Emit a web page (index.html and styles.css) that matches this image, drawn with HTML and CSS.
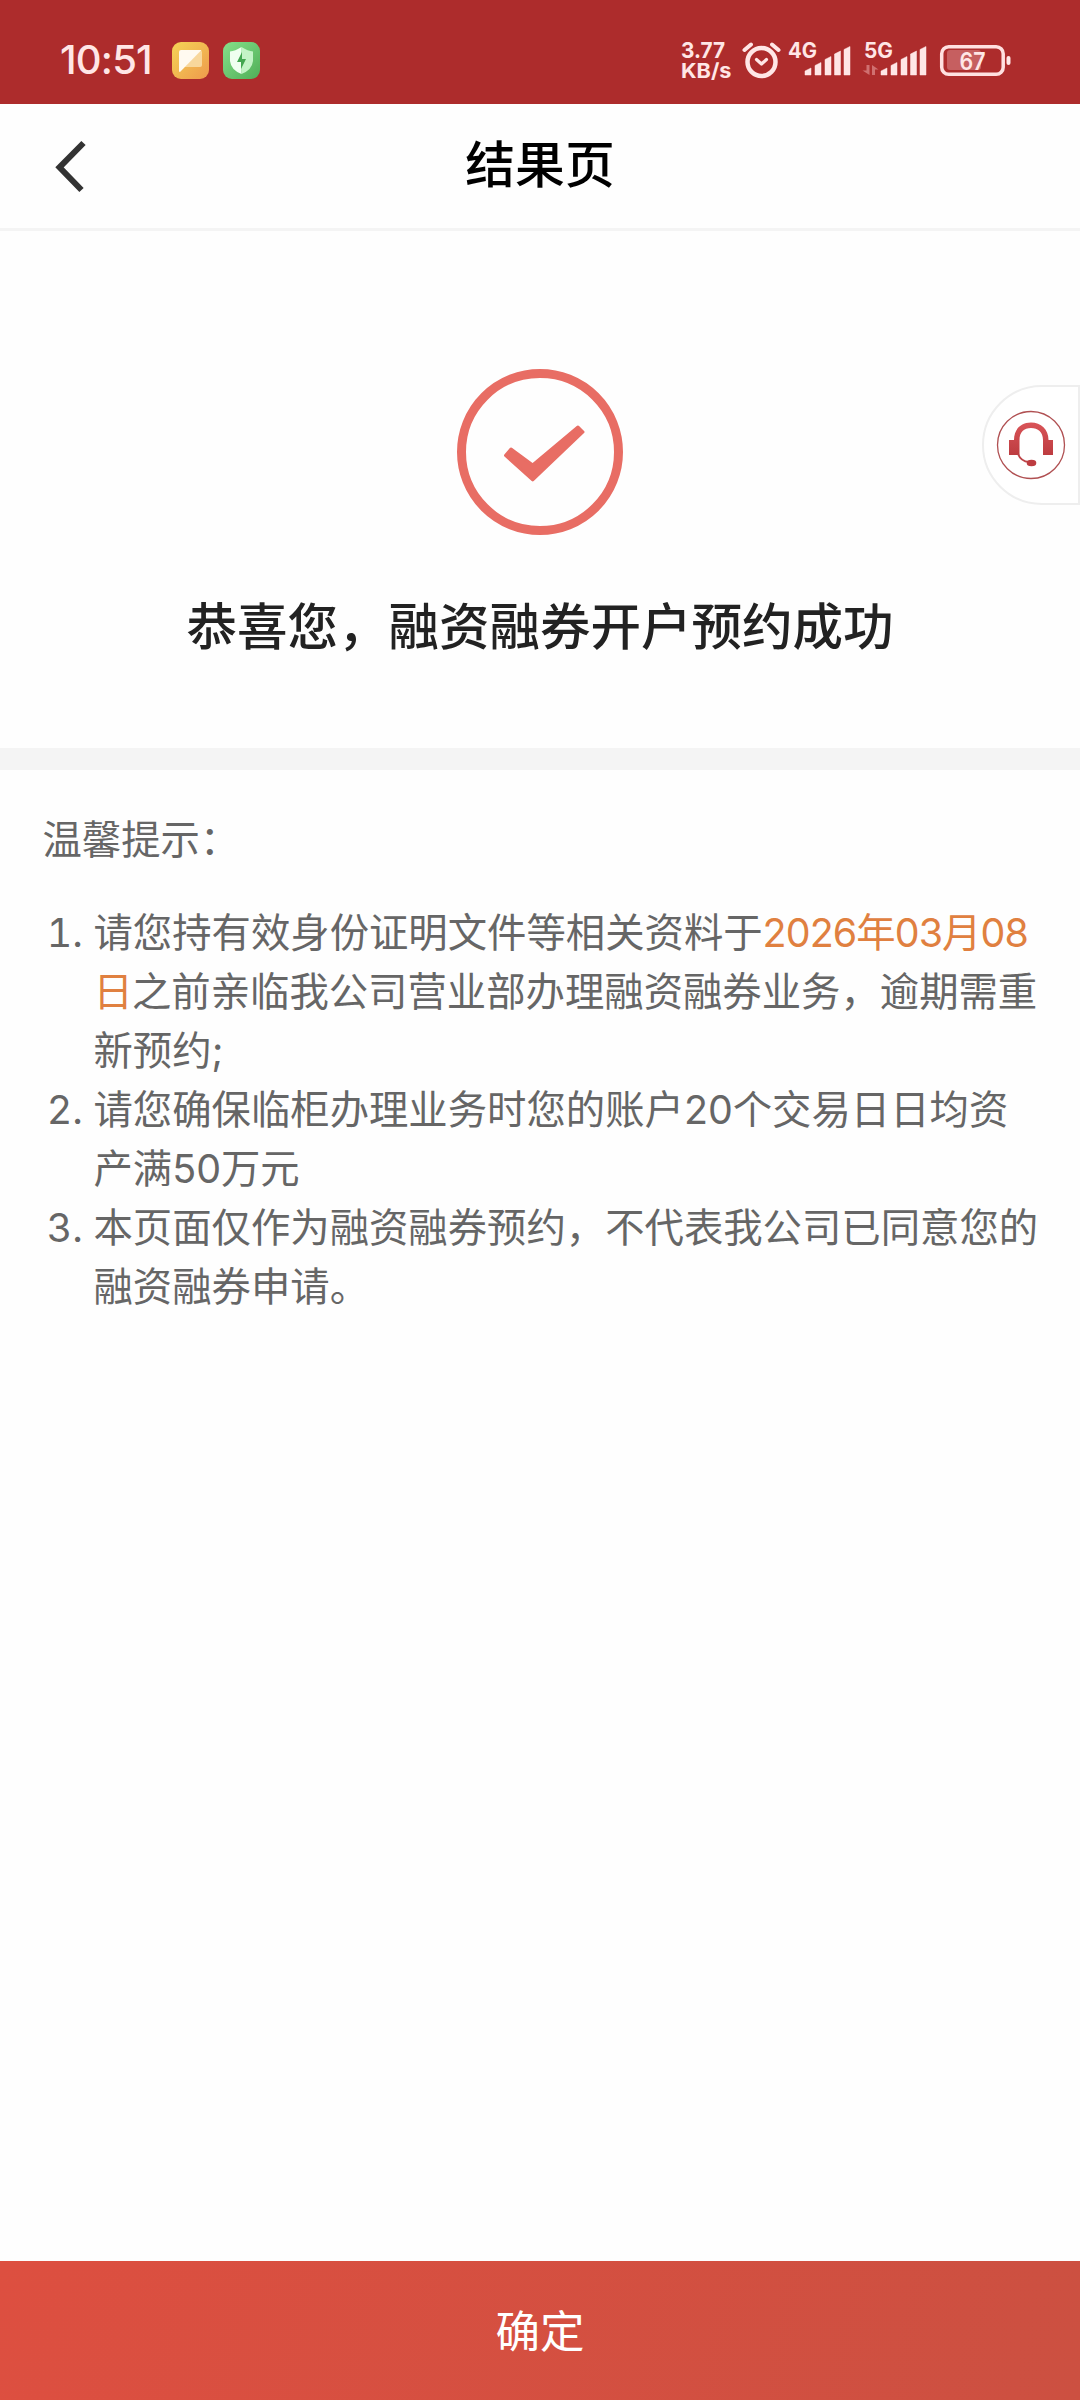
FILE: index.html
```html
<!DOCTYPE html>
<html lang="zh-CN">
<head>
    <meta charset="UTF-8">
    <title>结果页</title>
    <link rel="stylesheet" href="styles.css">
</head>
<body>
<div class="status-bar">
    <span class="time">10:51</span>
    <svg class="app-icon" width="37" height="37" viewBox="0 0 37 37">
        <defs>
            <linearGradient id="noteBg" x1="0" y1="0" x2="1" y2="1">
                <stop offset="0" stop-color="#f5d456"/>
                <stop offset="1" stop-color="#ee9a4c"/>
            </linearGradient>
        </defs>
        <rect width="37" height="37" rx="9" fill="url(#noteBg)"/>
        <path d="M28.500 8 L30 9.500 V23 Q30 25 28 25 H12.500 Z" fill="#f8d79c"/>
        <path d="M9 8 H29.500 L8 30 Q7 30 7 29 V10 Q7 8 9 8 Z" fill="#fffaf0"/>
    </svg>
    <svg class="app-icon" width="37" height="37" viewBox="0 0 37 37">
        <defs>
            <linearGradient id="guardBg" x1="0" y1="0" x2="1" y2="1">
                <stop offset="0" stop-color="#86e08a"/>
                <stop offset="1" stop-color="#4fae57"/>
            </linearGradient>
        </defs>
        <rect width="37" height="37" rx="9" fill="url(#guardBg)"/>
        <path d="M18.500 5 Q12 9 7 9.500 V19 Q8 28 18.500 32 Z" fill="#effff0"/>
        <path d="M18.500 5 Q25 9 30 9.500 V19 Q29 28 18.500 32 Z" fill="#c3f3c6"/>
        <path d="M19 10 L14 20 H18 L18 27 L23 17 H19 Z" fill="#43a650"/>
    </svg>

    <div class="status-right">
        <svg width="54" height="56" viewBox="680 30 54 56" class="status-text">
            <text x="681" y="57" font-size="22" textLength="44" lengthAdjust="spacingAndGlyphs">3.77</text>
            <text x="681" y="77" font-size="20.500" textLength="50.500" lengthAdjust="spacingAndGlyphs">KB/s</text>
        </svg>
        <svg width="52" height="44" viewBox="734 36 52 44" fill="none" stroke="#ffe6e6" stroke-linecap="round">
            <circle cx="761.500" cy="61" r="14" stroke-width="4.500"/>
            <path d="M744.500 49 L751 43.500 M778.500 49 L772 43.500" stroke-width="4"/>
            <path d="M756.500 58.500 L761.500 63 L766.500 58.500" stroke-width="3.200" stroke-linejoin="round"/>
        </svg>
        <svg width="70" height="44" viewBox="786 36 70 44" class="status-text">
            <text x="788" y="57" font-size="21" textLength="29" lengthAdjust="spacingAndGlyphs">4G</text>
            <path d="M805 74 V70 L811 67 V74 Z M815 74 V64.500 L821 61.500 V74 Z M825 74 V58.500 L831 55.500 V74 Z M834.500 74 V53 L840.500 50 V74 Z M844 74 V48.500 L850 45.500 V74 Z" stroke="#ffe6e6" stroke-linejoin="round" stroke-width="0.500"/>
        </svg>
        <svg width="76" height="44" viewBox="856 36 76 44" class="status-text">
            <text x="864" y="57" font-size="21" textLength="29" lengthAdjust="spacingAndGlyphs">5G</text>
            <path d="M866.500 64 H869.500 V74 L862.500 69.500 H866.500 Z M875 74 H872 V64 L878.500 68.500 H875 Z" fill="#d07070"/>
            <path d="M881 74 V70 L887 67 V74 Z M891 74 V64.500 L897 61.500 V74 Z M901 74 V58.500 L907 55.500 V74 Z M910.500 74 V53 L916.500 50 V74 Z M920 74 V48.500 L926 45.500 V74 Z" stroke="#ffe6e6" stroke-linejoin="round" stroke-width="0.500"/>
        </svg>
        <svg width="80" height="44" viewBox="932 36 80 44" class="status-text">
            <rect x="941.700" y="45.700" width="61.500" height="27.500" rx="7" fill="none" stroke="#ffe0e0" stroke-width="3.500"/>
            <rect x="947" y="49" width="34" height="20" rx="3" fill="#c65f60"/>
            <rect x="1006.500" y="55" width="4" height="9" rx="2"/>
            <text x="959.500" y="69" font-size="24.500" font-weight="600" textLength="26" lengthAdjust="spacingAndGlyphs">67</text>
        </svg>
    </div>
</div>

<div class="nav-bar">
    <svg class="back" width="40" height="60" viewBox="50 136 40 60">
        <path d="M84 143 L60 167.300 L82 190" transform="translate(-0.500 0)" fill="none" stroke="#333" stroke-width="6"/>
    </svg>
    <h1>结果页</h1>
</div>

<div class="result">
    <svg class="result-icon" width="166" height="166" viewBox="457 369 166 166">
        <circle cx="540" cy="452" r="78.500" fill="none" stroke="#e86d64" stroke-width="9"/>
        <path d="M511 449 L532.700 465 L578 427 L583 432 L532.700 480 L505.500 455.500 Z" fill="#e86d64" stroke="#e86d64" stroke-width="3" stroke-linejoin="round"/>
    </svg>
    <p class="result-text">恭喜您，融资融券开户预约成功</p>
</div>

<div class="tips">
    <p class="tips-title">温馨提示：</p>
    <ol>
        <li>请您持有效身份证明文件等相关资料于<span class="date">2026年03月08日</span>之前亲临我公司营业部办理融资融券业务，逾期需重新预约;</li>
        <li>请您确保临柜办理业务时您的账户20个交易日日均资产满50万元</li>
        <li>本页面仅作为融资融券预约，不代表我公司已同意您的融资融券申请。</li>
    </ol>
</div>

<button type="button" class="confirm">确定</button>

<!-- 在线客服 -->
<a class="service" href="#">
    <svg width="70" height="70" viewBox="996 410 70 70">
        <defs>
            <linearGradient id="headset" x1="0" y1="0" x2="0" y2="1">
                <stop offset="0" stop-color="#d95458"/>
                <stop offset="1" stop-color="#bd3c40"/>
            </linearGradient>
        </defs>
        <circle cx="1031" cy="445" r="33.500" fill="none" stroke="#b05052" stroke-width="1.300"/>
        <path d="M1009 440 H1014 C1014 429 1021 422.500 1031 422.500 C1041 422.500 1048.500 429 1048.500 440 H1053 V455 H1043 V440 C1043 432 1038 428 1031 428 C1024 428 1019.500 432 1019.500 440 V455 H1009 Z" fill="url(#headset)"/>
        <path d="M1018 454 Q1021 461.500 1029 462" fill="none" stroke="#bd4448" stroke-width="2"/>
        <ellipse cx="1031.500" cy="463" rx="4.800" ry="3.200" fill="#bd3c40"/>
    </svg>
</a>
</body>
</html>
```

FILE: styles.css
```css
* {
    box-sizing: border-box;
}

body, html {
    height: 100%;
    margin: 0;
}

body {
    position: relative;
    display: flex;
    flex-direction: column;
    min-height: 2400px;
    background-color: #fefefe;
    font-family: Inter, 'Noto Sans CJK SC', sans-serif;
}

svg {
    display: block;
    flex-shrink: 0;
}

.status-bar {
    display: flex;
    align-items: center;
    height: 104px;
    padding: 16px 68px 0 60px;
    background-color: #ad2c2c;
    color: #ffe6e6;
}

.time {
    width: 112px;
    font-size: 40px;
    font-weight: 500;
    line-height: 44px;
    letter-spacing: -0.8px;
}

.app-icon {
    margin-right: 14px;
}

.status-right {
    display: flex;
    align-items: center;
    margin-top: -2px;
    margin-left: auto;
}

.status-text {
    fill: #ffe6e6;
    font-weight: 700;
}

.nav-bar {
    display: flex;
    align-items: center;
    height: 127px;
    padding: 0 50px;
    border-bottom: 3px solid #f4f4f4;
}

.nav-bar h1 {
    flex: 1;
    margin: 0 40px 2px 0;
    color: #000;
    font-size: 49.8px;
    font-weight: 500;
    line-height: 60px;
    text-align: center;
}

.result {
    display: flex;
    flex-direction: column;
    align-items: center;
    height: 539px;
    padding-top: 138px;
    border-bottom: 22px solid #f4f4f4;
}

.result-text {
    margin: 57px 0 0;
    color: #222;
    font-size: 50.5px;
    font-weight: 500;
    line-height: 70px;
}

.tips {
    flex: 1;
    padding: 40px 40px 0 42.5px;
    color: #666;
    font-size: 39.36px;
    line-height: 59px;
}

.tips-title {
    margin: 0 0 34px;
}

.tips ol {
    margin: 0;
    padding-left: 51px;
}

.date {
    color: #e08040;
    letter-spacing: -0.9px;
}

.confirm {
    height: 139px;
    padding: 0 0 5px;
    border: none;
    background: linear-gradient(100deg, #dd4f40, #cc5041);
    color: #fff;
    font-family: inherit;
    font-size: 44.5px;
}

/* 悬浮在页面右侧的客服入口 */
.service {
    position: absolute;
    top: 385px;
    right: 0;
    display: flex;
    align-items: center;
    width: 98px;
    height: 120px;
    padding-left: 12px;
    border: 2px solid #eee;
    border-radius: 60px 0 0 60px;
    background-color: #fff;
}
```
